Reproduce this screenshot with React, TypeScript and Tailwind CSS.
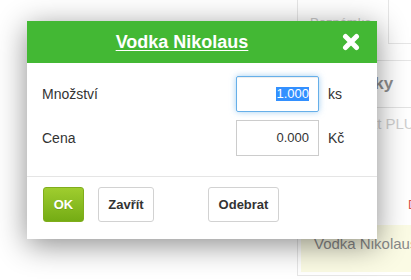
const font = { fontFamily: '"Liberation Sans", Arial, sans-serif' };

const CloseIcon = () => (
  <svg width="18" height="18" viewBox="0 0 18 18">
    <path d="M3.5 3.5 L14.5 14.5 M14.5 3.5 L3.5 14.5" stroke="#fff" strokeWidth="5" strokeLinecap="round" fill="none" />
  </svg>
);

const BackgroundPage = () => (
  <div className="flex h-full">
    <div className="w-[297px] shrink-0" />
    <div className="flex-1 flex flex-col">
      {/* note panel */}
      <div className="h-[61px] flex border-l border-b border-[#e6e6e6]">
        <div className="w-[90px] pl-[12px] pt-[13px] text-[13px] text-[#c9c9c9]">Poznámka</div>
        <div className="flex-1 h-[44px] border-l border-b border-[#e6e6e6]" />
      </div>
      {/* items heading */}
      <div className="h-[47px] flex items-center border-b border-[#e3e3e3] pl-[32px]">
        <span className="text-[17px] font-bold text-[#8f8f8f]">Položky</span>
      </div>
      <div className="h-[32px] flex items-center pl-[41px]">
        <span className="text-[15px] text-[#cfcfcf] whitespace-nowrap">Hledat PLU</span>
      </div>
      <div className="h-[55px]" />
      <div className="h-[20px] pl-[111px] text-[13px] text-[#d9534f] whitespace-nowrap overflow-hidden">Dnes</div>
      <div className="h-[6px]" />
      <div className="border-l border-b border-[#e6e6e6] pl-[3px] pt-[4px] pb-[3px]">
        <div className="h-[47px] bg-[#fbfbe4] pl-[13px] pt-[10px] text-[15px] leading-[18px] text-[#8a8a8a] whitespace-nowrap">
          Vodka Nikolaus
        </div>
      </div>
    </div>
  </div>
);

const Modal = () => (
  <div className="absolute left-[27px] top-[21px] w-[350px] bg-white shadow-[0_6px_28px_rgba(0,0,0,0.45)]">
    <div className="h-[42px] bg-[#43b834] flex items-center">
      <div className="flex-1 text-center">
        <span className="text-white text-[18px] font-bold underline underline-offset-[2px] decoration-[1px]">Vodka Nikolaus</span>
      </div>
      <div className="w-[40px] pl-[5px] flex items-center">
        <CloseIcon />
      </div>
    </div>

    <div className="px-[15px] pt-[13px] pb-[20px] flex flex-col gap-[8px] text-[#333]">
      <div className="flex items-center">
        <span className="flex-1 text-[14px]">Množství</span>
        <div className="w-[83px] h-[36px] border border-[#66afe9] rounded-[2px] shadow-[inset_0_1px_1px_rgba(0,0,0,0.075),0_0_6px_rgba(102,175,233,0.6)] flex items-center justify-end pr-[9px]">
          <span className="bg-[#3390ff] text-white text-[13px] leading-[14px]">1.000</span>
        </div>
        <span className="w-[43px] pl-[9px] text-[14px]">ks</span>
      </div>
      <div className="flex items-center">
        <span className="flex-1 text-[14px]">Cena</span>
        <div className="w-[83px] h-[36px] border border-[#cccccc] flex items-center justify-end pr-[9px]">
          <span className="text-[13px]">0.000</span>
        </div>
        <span className="w-[43px] pl-[9px] text-[14px]">Kč</span>
      </div>
    </div>

    <div className="border-t border-[#e5e5e5] pl-[16px] pt-[10px] pb-[17px] flex items-center">
      <button className="w-[41px] h-[35px] text-center rounded-[3px] border border-[#80ad1c] bg-gradient-to-b from-[#9fcd2e] to-[#74ac14] text-white text-[13px] font-bold [text-shadow:0_1px_0_rgba(0,0,0,0.15)]">
        OK
      </button>
      <button className="ml-[14px] w-[56px] h-[35px] text-center rounded-[3px] border border-[#d2d2d2] bg-white text-[#333] text-[13px] font-bold">
        Zavřít
      </button>
      <button className="ml-[54px] w-[71px] h-[35px] text-center rounded-[3px] border border-[#d2d2d2] bg-white text-[#333] text-[13px] font-bold">
        Odebrat
      </button>
    </div>
  </div>
);

export default function App() {
  return (
    <div className="w-[411px] h-[280px] relative overflow-hidden bg-white" style={font}>
      <BackgroundPage />
      <Modal />
    </div>
  );
}
